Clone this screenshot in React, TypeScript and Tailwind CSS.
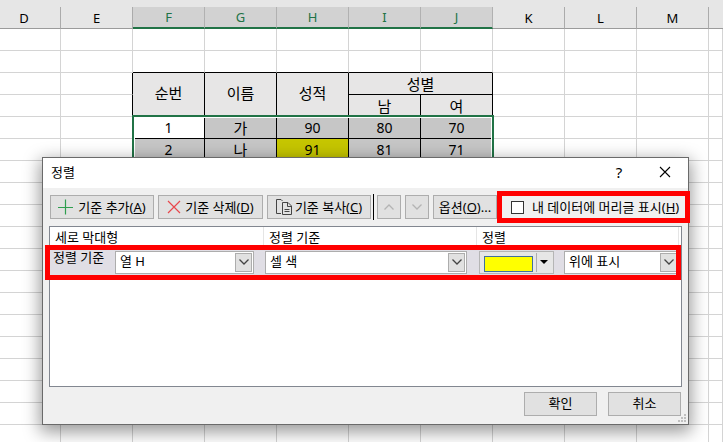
import React from 'react';

const columns = ['D', 'E', 'F', 'G', 'H', 'I', 'J', 'K', 'L', 'M'];
const selectedColumns = ['F', 'G', 'H', 'I', 'J'];

const font = "font-['Noto_Sans','Noto_Sans_CJK_KR',sans-serif]";
const cell = 'h-[22px] border-r border-b p-0 text-center';
const gridCell = `${cell} border-[#d4d4d4]`;
const headCell = `${cell} border-black bg-[#e7e6e6]`;
const dataCell = `${cell} border-black`;
const numberCell = `${dataCell} text-sm leading-5`;
const button =
  'flex h-6 shrink-0 items-center justify-center border border-[#adadad] bg-[#e1e1e1] whitespace-nowrap';

function Blank({ keys, last }: { keys: string[]; last?: string }) {
  return (
    <>
      {keys.map((k) => (
        <td key={k} className={k === last ? `${cell} border-r-black border-b-[#d4d4d4]` : gridCell} />
      ))}
    </>
  );
}

function Sheet() {
  return (
    <table className="-ml-3 w-[calc(100%+12px)] table-fixed border-separate border-spacing-0 text-[15px] leading-5 text-black">
      <colgroup>
        <col className="w-[73px]" />
        {columns.slice(1).map((c) => (
          <col key={c} className="w-[72px]" />
        ))}
        <col />
      </colgroup>
      <thead className="text-[13px]">
        <tr>
          {columns.map((c) => (
            <th
              key={c}
              scope="col"
              className={
                selectedColumns.includes(c)
                  ? 'h-[22px] border-r border-b-2 border-r-[#b1b1b1] border-b-[#217346] bg-[#d2d2d2] p-0 leading-4 font-normal text-[#217346]'
                  : 'h-[22px] border-r border-b border-r-[#ababab] border-b-[#9b9b9b] p-0 leading-4 font-normal'
              }
            >
              {c}
            </th>
          ))}
          <th className="h-[22px] border-b border-[#9b9b9b] p-0" />
        </tr>
      </thead>
      <tbody>
        <tr>
          <Blank keys={[...columns, 'rest']} />
        </tr>
        <tr>
          {columns.map((c) => (
            <td
              key={c}
              className={
                selectedColumns.includes(c) ? `${cell} border-r-[#d4d4d4] border-b-black` : gridCell
              }
            />
          ))}
          <td className={gridCell} />
        </tr>
        <tr>
          <Blank keys={['D', 'E']} last="E" />
          <td rowSpan={2} className={`${headCell} pb-1`}>순번</td>
          <td rowSpan={2} className={`${headCell} pb-1`}>이름</td>
          <td rowSpan={2} className={`${headCell} pb-1`}>성적</td>
          <td colSpan={2} className={headCell}>성별</td>
          <Blank keys={['K', 'L', 'M', 'rest']} />
        </tr>
        <tr>
          <Blank keys={['D', 'E']} last="E" />
          <td className={headCell}>남</td>
          <td className={headCell}>여</td>
          <Blank keys={['K', 'L', 'M', 'rest']} />
        </tr>
        <tr>
          <Blank keys={['D', 'E']} />
          <td className={`${numberCell} bg-white`}>1</td>
          <td className={`${dataCell} bg-[#c6c6c6]`}>가</td>
          <td className={`${numberCell} bg-[#c6c6c6]`}>90</td>
          <td className={`${numberCell} bg-[#c6c6c6]`}>80</td>
          <td className={`${numberCell} bg-[#c6c6c6]`}>70</td>
          <Blank keys={['K', 'L', 'M', 'rest']} />
        </tr>
        <tr>
          <Blank keys={['D', 'E']} />
          <td className={`${numberCell} bg-[#c6c6c6]`}>2</td>
          <td className={`${dataCell} bg-[#c6c6c6]`}>나</td>
          <td className={`${numberCell} bg-[#c6c600]`}>91</td>
          <td className={`${numberCell} bg-[#c6c6c6]`}>81</td>
          <td className={`${numberCell} bg-[#c6c6c6]`}>71</td>
          <Blank keys={['K', 'L', 'M', 'rest']} />
        </tr>
        {Array.from({ length: 13 }, (_, i) => (
          <tr key={i}>
            <Blank keys={[...columns, 'rest']} />
          </tr>
        ))}
      </tbody>
    </table>
  );
}

function Chevron({ up }: { up?: boolean }) {
  return (
    <svg viewBox="0 0 10 6" className="h-[6px] w-[10px]" fill="none" stroke="currentColor" strokeWidth="1.3">
      <path d={up ? 'M.5 5.500 5 1 9.500 5.500' : 'M.5 .5 5 5 9.500 .5'} />
    </svg>
  );
}

function Combo({ label, value, className }: { label: string; value: string; className: string }) {
  return (
    <div className={`relative h-[23px] shrink-0 ${className}`}>
      <select
        aria-label={label}
        className="block h-full w-full appearance-none border border-[#adadad] bg-white pb-[2px] pl-1 leading-4 text-black"
      >
        <option>{value}</option>
      </select>
      <span className="pointer-events-none absolute inset-y-[2px] right-[2px] flex w-[17px] items-center justify-center border border-[#adadad] bg-[#e1e1e1] text-[#444]">
        <Chevron />
      </span>
    </div>
  );
}

function SortDialog() {
  return (
    <div
      role="dialog"
      aria-labelledby="sort-title"
      className="absolute top-[157px] left-[42px] w-[647px] border border-[#6a6a6a] bg-[#f0f0f0] text-[13px] leading-4 text-black shadow-[0_5px_16px_2px_rgba(0,0,0,0.4)]"
    >
      <div className="flex h-[30px] items-center bg-white pr-4 pb-[2px] pl-2">
        <h1 id="sort-title" className="grow">정렬</h1>
        <button type="button" className="w-5 text-center text-[15px]">?</button>
        <button type="button" aria-label="닫기" className="ml-[29px] flex h-5 w-[14px] items-center justify-center">
          <svg viewBox="0 0 12 12" className="h-3 w-3" stroke="#000" strokeWidth="1.1">
            <path d="M1 1 11 11M11 1 1 11" />
          </svg>
        </button>
      </div>

      <div className="flex h-[38px] items-center gap-1 pl-[7px]">
        <button type="button" className={`${button} w-[104px] gap-1`}>
          <svg viewBox="0 0 16 16" className="h-4 w-4" stroke="#2f9e4f" strokeWidth="1.2">
            <path d="M7.500 .5V15.500M0 8.500H15" />
          </svg>
          <span>기준 추가(<u>A</u>)</span>
        </button>
        <button type="button" className={`${button} w-[105px] gap-1`}>
          <svg viewBox="0 0 14 14" className="h-[14px] w-[14px]" stroke="#e8474c" strokeWidth="1.2">
            <path d="M1 1 13 13M13 1 1 13" />
          </svg>
          <span>기준 삭제(<u>D</u>)</span>
        </button>
        <button type="button" className={`${button} w-[104px] gap-[3px]`}>
          <svg viewBox="0 0 16 16" className="h-4 w-4" fill="none" stroke="#444" strokeWidth="1">
            <path d="M5 14.500H.5V.5H5L6.500 2M6.500 3.500H12L15.500 7V15.500H6.500ZM11.500 3.500V7.500H15.500M8.500 10.500H13.500M8.500 12.500H13.500" />
          </svg>
          <span>기준 복사(<u>C</u>)</span>
        </button>
        <div className="-mx-[2px] h-[26px] w-[1px] shrink-0 bg-black" />
        <button type="button" disabled aria-label="위로 이동" className={`${button} ml-[1px] w-6 text-[#b4b4b4]`}>
          <Chevron up />
        </button>
        <button type="button" disabled aria-label="아래로 이동" className={`${button} w-6 text-[#b4b4b4]`}>
          <Chevron />
        </button>
        <button type="button" className={`${button} w-[64px]`}>
          <span>옵션(<u>O</u>)...</span>
        </button>
        <label className="relative ml-[10px] flex shrink-0 items-center gap-2 whitespace-nowrap">
          <input type="checkbox" className="h-[13px] w-[13px] appearance-none border border-[#333] bg-white" />
          <span>내 데이터에 머리글 표시(<u>H</u>)</span>
          <span className="pointer-events-none absolute -top-2 -left-[14px] h-8 w-[193px] border-[5px] border-[#ff0000]" />
        </label>
      </div>

      <div className="mr-[6px] ml-[6px] h-[161px] border border-[#828790] bg-white">
        <div className="grid h-5 grid-cols-[214px_213px_1fr] items-center">
          <div className="flex h-5 items-center border-r border-[#e5e5e5] pl-[5px]">세로 막대형</div>
          <div className="flex h-5 items-center border-r border-[#e5e5e5] pl-[5px]">정렬 기준</div>
          <div className="mr-[2px] flex h-5 items-center border-r border-[#e5e5e5] pl-[5px]">정렬</div>
        </div>
        <div className="relative flex h-[30px] items-center bg-[#e0dee5] pl-[3px]">
          <span className="w-[62px] shrink-0 pb-[10px]">정렬 기준</span>
          <Combo label="열" value="열 H" className="w-[139px]" />
          <Combo label="정렬 기준" value="셀 색" className="ml-[11px] w-[202px]" />
          <button
            type="button"
            aria-label="색"
            className="ml-3 flex h-[23px] w-[75px] shrink-0 items-center border border-[#b5b5b5] bg-[#e6e6e6] pl-1"
          >
            <span className="mt-[3px] h-4 w-[49px] border border-[#41719c] bg-[#ffff00]" />
            <span className="ml-[3px] h-[19px] w-[1px] bg-[#adadad]" />
            <svg viewBox="0 0 8 4" className="ml-[3px] h-1 w-2">
              <path d="M0 0H8L4 4Z" fill="#000" />
            </svg>
          </button>
          <Combo label="정렬" value="위에 표시" className="ml-[10px] w-[115px]" />
          <span className="pointer-events-none absolute -top-[2px] right-0 -bottom-[3px] -left-[5px] border-[5px] border-[#ff0000]" />
        </div>
      </div>

      <div className="relative flex justify-end gap-[11px] pt-[5px] pr-[7px] pb-2">
        <button type="button" className={`${button} w-[73px] pb-[2px]`}>확인</button>
        <button type="button" className={`${button} w-[73px] pb-[2px]`}>취소</button>
        <svg viewBox="0 0 8 8" className="absolute right-[2px] bottom-[2px] h-2 w-2" fill="#bfbfbf">
          <path d="M6 0h2v2h-2zM3 3h2v2h-2zM6 3h2v2h-2zM0 6h2v2h-2zM3 6h2v2h-2zM6 6h2v2h-2z" />
        </svg>
      </div>
    </div>
  );
}

export default function App() {
  return (
    <main className={`relative h-screen overflow-hidden bg-white ${font}`}>
      <div className="bg-[linear-gradient(#e6e6e6_28px,#ffffff_28px)] pt-[7px]">
        <Sheet />
      </div>
      <div className="pointer-events-none absolute top-[115px] left-[132px] h-[60px] w-[362px] border-2 border-[#217346]">
        <div className="h-full border border-white" />
      </div>
      <SortDialog />
    </main>
  );
}
